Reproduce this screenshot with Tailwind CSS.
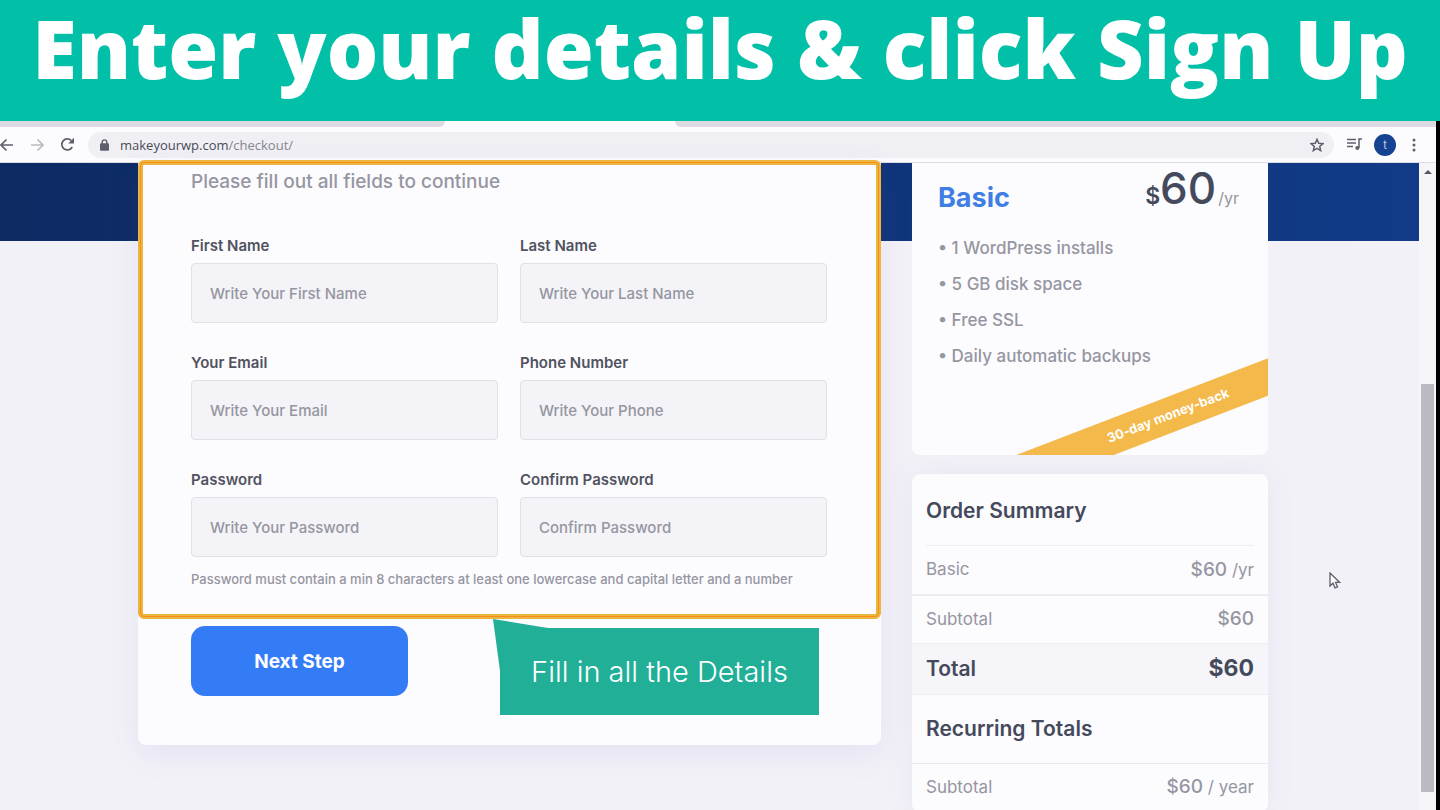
<!DOCTYPE html>
<html lang="en">
<head>
    <meta charset="UTF-8">
    <meta name="viewport" content="width=device-width, initial-scale=1.0">
    <title>Checkout - MakeYourWP</title>
    <script src="https://cdn.jsdelivr.net/npm/@tailwindcss/browser@4"></script>
</head>
<body class="h-screen overflow-hidden flex flex-col bg-[#f2f1f7] font-['Inter',sans-serif] text-[#444a5c]">
    <!-- Banner -->
    <header class="shrink-0 h-[121px] bg-[#02bfa7]">
        <h1 class="text-center text-[81px] leading-[96px] font-extrabold text-white whitespace-nowrap font-['Open_Sans',sans-serif]">Enter your details &amp; click Sign Up</h1>
    </header>

    <div class="flex-1 min-h-0 flex flex-col border-r-4 border-black">
        <!-- Tab strip -->
        <div class="shrink-0 flex h-[6px] bg-[#fcfbfe]">
            <div class="w-[445px] bg-[#dcdbe1] rounded-br-md"></div>
            <div class="w-[230px]"></div>
            <div class="flex-1 bg-[#dcdbe1] rounded-bl-md"></div>
        </div>

        <!-- Toolbar -->
        <nav class="shrink-0 flex items-center h-[36px] bg-[#fcfbfe] border-b border-[#dddce3] text-[#5d606b]">
            <button aria-label="Back" class="w-[14px]">
                <svg class="w-[14px] h-[14px]" viewBox="0 0 14 14" fill="none" stroke="currentColor" stroke-width="1.700"><path d="M13 7H1.500M6.500 1.500L1 7l5.500 5.500"/></svg>
            </button>
            <button aria-label="Forward" class="ml-[16px] text-[#b9bac2]">
                <svg class="w-[14px] h-[14px]" viewBox="0 0 14 14" fill="none" stroke="currentColor" stroke-width="1.700"><path d="M1 7h11.500M7.500 1.500L13 7l-5.500 5.500"/></svg>
            </button>
            <button aria-label="Reload" class="ml-[16px]">
                <svg class="w-[15px] h-[15px]" viewBox="0 0 15 15"><path d="M12.200 10A5.500 5.500 0 1 1 11.300 3.600" fill="none" stroke="currentColor" stroke-width="1.700"/><path d="M14 .8v5.700H8.300z" fill="currentColor"/></svg>
            </button>
            <div class="ml-[13px] flex-1 flex items-center h-[26px] pl-[12px] pr-[10px] rounded-full bg-[#f0eff4]">
                <svg class="w-[9px] h-[12px]" viewBox="0 0 9 12"><path d="M2.200 5V3.200a2.300 2.300 0 0 1 4.600 0V5" fill="none" stroke="currentColor" stroke-width="1.400"/><rect y="4.300" width="9" height="7.500" rx="1" fill="currentColor"/></svg>
                <span class="ml-[11px] text-[13px] leading-[20px] font-['Open_Sans',sans-serif] text-[#4a4c58]">makeyourwp.com<span class="text-[#84868f]">/checkout/</span></span>
                <button aria-label="Bookmark" class="ml-auto">
                    <svg class="w-[14px] h-[14px]" viewBox="0 0 14 14" fill="none" stroke="currentColor" stroke-width="1.500"><path d="M7 1.300l1.700 3.900 4.200.4-3.200 2.800 1 4.200L7 10.400l-3.700 2.200 1-4.200L1.100 5.600l4.200-.4z"/></svg>
                </button>
            </div>
            <button aria-label="Media" class="ml-[13px]">
                <svg class="w-[15px] h-[13px]" viewBox="0 0 15 13" fill="none" stroke="currentColor" stroke-width="1.500"><path d="M0 1.500h9M0 5h9M0 8.500h6M12 10V1h3"/><circle cx="10.300" cy="10" r="2" fill="currentColor" stroke="none"/></svg>
            </button>
            <button aria-label="Profile" class="ml-[12px] w-[22px] h-[22px] rounded-full bg-[#154391] text-[#c9d4ec] text-[11px] leading-[22px]">t</button>
            <button aria-label="Menu" class="ml-[16px] mr-[20px]">
                <svg class="w-[4px] h-[14px]" viewBox="0 0 4 14" fill="currentColor"><circle cx="2" cy="2" r="1.500"/><circle cx="2" cy="7" r="1.500"/><circle cx="2" cy="12" r="1.500"/></svg>
            </button>
        </nav>

        <div class="flex-1 min-h-0 flex">
            <!-- Page -->
            <div class="flex-1 min-w-0 relative">
                <div class="absolute inset-x-0 top-0 h-[78px] bg-linear-to-r from-[#0d2a63] to-[#113b88]"></div>

                <div class="relative flex items-start gap-[31px] pl-[138px] pr-[151px]">
                    <!-- Details form -->
                    <main class="relative flex-1 h-[582px] pl-[53px] pr-[54px] pt-[5px] bg-[#fcfbfe] rounded-b-lg shadow-[0_10px_30px_rgba(120,110,220,0.10)]">
                        <form>
                            <p class="text-[19px] leading-[28px] font-medium text-[#9596a1]">Please fill out all fields to continue</p>
                            <div class="mt-[38px] grid grid-cols-2 gap-x-[22px] gap-y-[28px]">
                                <div class="flex flex-col gap-[5px]">
                                    <label for="firstName" class="text-[15px] leading-[24px] font-semibold text-[#50535f]">First Name</label>
                                    <input id="firstName" type="text" placeholder="Write Your First Name" class="w-full h-[60px] px-[18px] rounded-[4px] border border-[#e1e0e8] bg-[#f4f3f7] text-[15px] font-medium placeholder:text-[#9596a1]">
                                </div>
                                <div class="flex flex-col gap-[5px]">
                                    <label for="lastName" class="text-[15px] leading-[24px] font-semibold text-[#50535f]">Last Name</label>
                                    <input id="lastName" type="text" placeholder="Write Your Last Name" class="w-full h-[60px] px-[18px] rounded-[4px] border border-[#e1e0e8] bg-[#f4f3f7] text-[15px] font-medium placeholder:text-[#9596a1]">
                                </div>
                                <div class="flex flex-col gap-[5px]">
                                    <label for="email" class="text-[15px] leading-[24px] font-semibold text-[#50535f]">Your Email</label>
                                    <input id="email" type="email" placeholder="Write Your Email" class="w-full h-[60px] px-[18px] rounded-[4px] border border-[#e1e0e8] bg-[#f4f3f7] text-[15px] font-medium placeholder:text-[#9596a1]">
                                </div>
                                <div class="flex flex-col gap-[5px]">
                                    <label for="phone" class="text-[15px] leading-[24px] font-semibold text-[#50535f]">Phone Number</label>
                                    <input id="phone" type="tel" placeholder="Write Your Phone" class="w-full h-[60px] px-[18px] rounded-[4px] border border-[#e1e0e8] bg-[#f4f3f7] text-[15px] font-medium placeholder:text-[#9596a1]">
                                </div>
                                <div class="flex flex-col gap-[5px]">
                                    <label for="password" class="text-[15px] leading-[24px] font-semibold text-[#50535f]">Password</label>
                                    <input id="password" type="password" placeholder="Write Your Password" class="w-full h-[60px] px-[18px] rounded-[4px] border border-[#e1e0e8] bg-[#f4f3f7] text-[15px] font-medium placeholder:text-[#9596a1]">
                                </div>
                                <div class="flex flex-col gap-[5px]">
                                    <label for="confirm" class="text-[15px] leading-[24px] font-semibold text-[#50535f]">Confirm Password</label>
                                    <input id="confirm" type="password" placeholder="Confirm Password" class="w-full h-[60px] px-[18px] rounded-[4px] border border-[#e1e0e8] bg-[#f4f3f7] text-[15px] font-medium placeholder:text-[#9596a1]">
                                </div>
                            </div>
                            <p class="mt-[12px] text-[13px] leading-[20px] font-medium text-[#9596a1] whitespace-nowrap">Password must contain a min 8 characters at least one lowercase and capital letter and a number</p>
                            <button type="submit" class="mt-[37px] pt-[2px] w-[217px] h-[70px] rounded-[14px] bg-[#347cf6] text-[19px] font-bold text-white">Next Step</button>
                        </form>

                        <!-- Highlight frame and callout -->
                        <div class="absolute inset-x-0 -top-[3px] h-[459px] rounded-[6px] border-[5px] border-[#eab540] pointer-events-none">
                            <div class="absolute -inset-[3px] rounded-[4px] border border-[#fb8c14]"></div>
                        </div>
                        <div class="absolute left-[355px] top-[456px] w-[326px] h-[96px] pl-[7px] pt-[10px] flex items-center justify-center bg-[#21af98] text-white text-[29px] leading-[36px] font-light whitespace-nowrap [clip-path:polygon(0_0,55px_9px,100%_9px,100%_100%,7px_100%,7px_52px)]">Fill in all the Details</div>
                    </main>

                    <aside class="w-[356px]">
                        <!-- Plan -->
                        <section class="relative overflow-hidden h-[292px] px-[26px] bg-[#fcfbfe] rounded-b-lg">
                            <div class="flex items-start justify-between pr-[3px]">
                                <h2 class="mt-[17px] text-[27px] leading-[36px] font-bold text-[#3f7fe3]">Basic</h2>
                                <p class="flex items-baseline leading-[50px]">
                                    <span class="text-[23px] font-semibold">$</span>
                                    <span class="text-[44px] font-medium">60</span>
                                    <span class="ml-[2px] text-[16px] text-[#9596a1]">/yr</span>
                                </p>
                            </div>
                            <ul class="mt-[7px] text-[17px] leading-[36px] font-medium text-[#9596a1]">
                                <li>• 1 WordPress installs</li>
                                <li>• 5 GB disk space</li>
                                <li>• Free SSL</li>
                                <li>• Daily automatic backups</li>
                            </ul>
                            <div class="absolute -right-[60px] bottom-[22px] w-[320px] h-[35px] -rotate-21 bg-[#f4b94b] text-center text-[13px] leading-[35px] font-bold text-white">30-day money-back</div>
                        </section>

                        <!-- Order summary -->
                        <section class="mt-[19px] bg-[#fcfbfe] rounded-lg shadow-[0_0_30px_rgba(120,110,220,0.08)]">
                            <h2 class="mx-[14px] pt-[21px] pb-[18px] border-b border-[#eeedf2] text-[21px] leading-[32px] font-semibold">Order Summary</h2>
                            <table class="w-full text-[17px] text-[#9596a1]">
                                <tr class="h-[49px] border-b-2 border-[#ecebf1]"><th class="pl-[14px] text-left font-normal">Basic</th><td class="pr-[14px] text-right"><span class="text-[19px] font-medium">$60</span> /yr</td></tr>
                                <tr class="h-[48px] border-b border-[#eeedf2]"><th class="pl-[14px] text-left font-normal">Subtotal</th><td class="pr-[14px] text-right text-[19px] font-medium">$60</td></tr>
                                <tr class="h-[51px] border-b border-[#eeedf2] bg-[#f6f5f9] text-[#444a5c]"><th class="pl-[14px] text-left text-[21px] font-semibold">Total</th><td class="pr-[14px] text-right text-[23px] font-bold">$60</td></tr>
                            </table>
                            <h2 class="px-[14px] pt-[18px] pb-[18px] border-b border-[#e9e8ee] text-[21px] leading-[32px] font-semibold">Recurring Totals</h2>
                            <table class="w-full text-[17px] text-[#9596a1]">
                                <tr class="h-[48px]"><th class="pl-[14px] text-left font-normal">Subtotal</th><td class="pr-[14px] text-right"><span class="text-[19px] font-medium">$60</span> / year</td></tr>
                            </table>
                        </section>
                    </aside>
                </div>

                <!-- Mouse pointer -->
                <svg class="absolute left-[1329px] top-[409px] w-[12px] h-[18px]" viewBox="0 0 12 18"><path d="M1 1v13l3-2.800 2 4.600 2.500-1-2-4.500h4z" fill="#fff" stroke="#5b5d6b" stroke-width="1.300"/></svg>
            </div>

            <!-- Scrollbar -->
            <div class="w-[17px] shrink-0 flex flex-col items-center bg-[#f6f5fa]">
                <div class="mt-[7px] border-x-4 border-x-transparent border-b-4 border-b-[#555763]"></div>
                <div class="mt-[210px] w-[13px] h-[408px] bg-[#bbbac1]"></div>
            </div>
        </div>
    </div>
</body>
</html>
